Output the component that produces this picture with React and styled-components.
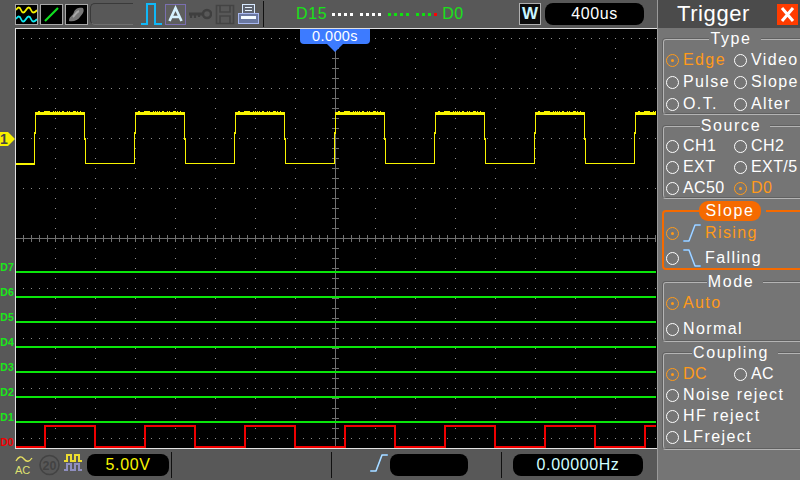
import React from "react";
import styled, { createGlobalStyle } from "styled-components";

const Global = createGlobalStyle`
  html, body { margin: 0; padding: 0; width: 800px; height: 480px; overflow: hidden; background: #585858; }
  * { box-sizing: border-box; }
`;

const Screen = styled.div`
  width: 800px; height: 480px; display: grid; grid-template-columns: 657px 143px;
  font-family: "Liberation Sans", Arial, sans-serif; overflow: hidden; background: #585858;
`;
const Main = styled.div`display: grid; grid-template-rows: 28px 421px 31px; min-width: 0;`;
const TopBar = styled.header`display: flex; align-items: center; padding-left: 15px;`;
const Tools = styled.div`display: flex; align-items: center; gap: ${p => p.$gap}px; margin-left: ${p => p.$ml || 0}px;`;
const IconBox = styled.div`
  width: 23px; height: 21px; display: flex; background: #000; border: 1px solid #a8a8a8; outline: none;
  svg { display: block; width: 100%; height: 100%; }
`;
const Bracket = styled.div`
  width: 43px; height: 22px; border-top: 1px solid #3a3a3a; border-left: 1px solid #3a3a3a;
  border-top-left-radius: 5px; border-bottom-left-radius: 5px; border-bottom: 1px solid #707070;
`;
const Sep = styled.div`width: 1px; height: ${p => p.$h}px; background: ${p => p.$c || "#111"}; margin-left: ${p => p.$ml || 0}px; flex: none;`;
const Bus = styled.div`display: flex; align-items: center; margin-left: 32px; color: #19e319; font-size: 16px; letter-spacing: .6px; width: 170px; gap: 5px;`;
const DotRow = styled.div`display: flex; gap: 7px; align-items: center;`;
const DotGroup = styled.div`display: flex; gap: 3px;`;
const Dot = styled.i`display: block; width: 3px; height: 3px; background: ${p => p.$c};`;
const WBox = styled.div`
  width: 22px; height: 22px; margin-left: 53px; background: #0a0a0a; border: 1px solid #b0b0b0; color: #c9f6ff;
  font-size: 17px; font-weight: 700; line-height: 20px; text-align: center;
`;
const Pill = styled.div`
  width: ${p => p.$w}px; height: 22px; margin-left: ${p => p.$ml || 0}px; background: #000; border-radius: 8px; color: ${p => p.$c || "#fff"};
  font-size: 16px; letter-spacing: .6px; line-height: 22px; text-align: center; flex: none;
`;
const Mid = styled.div`display: flex; min-height: 0;`;
const Gutter = styled.div`width: 15px; display: flex; flex-direction: column; align-items: flex-start; padding-bottom: 2px;`;
const Marker = styled.div`
  margin-top: 104px; width: 15px; height: 14px; background: #f6f000; color: #444; font-size: 14px; font-weight: 700; line-height: 14px; padding-left: 0;
  clip-path: polygon(0 0, 8px 0, 15px 50%, 8px 100%, 0 100%);
`;
const Labels = styled.div`margin-top: auto; display: flex; flex-direction: column; gap: 15px;`;
const Tag = styled.div`height: 10px; width: 14px; font-size: 10.5px; line-height: 10px; font-weight: 700; text-align: center; color: ${p => p.$c}; white-space: nowrap;`;
const Plot = styled.div`
  position: relative; flex: 1; background: #000; border-left: 1px solid #e0e0e0; border-top: 1px solid #e0e0e0; border-bottom: 1px solid #e0e0e0;
  svg { display: block; }
`;
const TimeFlag = styled.div`
  position: absolute; left: 284px; top: 0; width: 70px; height: 15px; background: #3d7bff; color: #fff; border-radius: 0 0 4px 4px;
  font-size: 14.5px; letter-spacing: .4px; line-height: 15px; text-align: center;
  &::after { content: ""; position: absolute; left: 27px; top: 15px; border: 8px solid transparent; border-bottom: 0; border-top: 8px solid #3d7bff; }
`;
const BottomBar = styled.footer`display: flex; align-items: center; padding: 0 0 0 15px; gap: 0;`;
const Small = styled.div`width: ${p => p.$w}px; height: 24px; margin-left: ${p => p.$ml || 0}px; flex: none; svg { display: block; }`;

const Panel = styled.aside`
  background: #757575; color: #fff; overflow: hidden; display: flex; flex-direction: column; border-left: 1px solid #9a9a9a;
`;
const Head = styled.div`
  height: 28px; flex: none; background: #4b4b4b; display: flex; align-items: center; justify-content: flex-end; padding-right: 2px;
`;
const Title = styled.h1`margin: 0 27px 0 0; font-size: 22px; font-weight: 400; letter-spacing: .6px; line-height: 28px;`;
const Close = styled.div`width: 21px; height: 21px; background: #ff3c00; display: flex; svg { display: block; }`;
const Group = styled.fieldset`
  margin: ${p => p.$mt || 0}px -6px 0 4px; padding: ${p => p.$pt}px 0 ${p => p.$pb}px 2px; min-width: 0;
  border: 2px ${p => p.$on ? "solid #f56a00" : "groove #b4b4b4"}; border-radius: 4px;
  display: grid; grid-template-columns: 68px 68px; row-gap: ${p => p.$gap}px;
`;
const Legend = styled.legend`
  margin: 0 auto; height: 20px; line-height: 20px; font-size: 16px; letter-spacing: 1.6px; padding: 0 5px; transform: translateX(-4px);
`;
const OnLegend = styled.legend`
  margin: 0 auto; height: 20px; line-height: 19px; font-size: 16px; letter-spacing: 1.6px; padding: 0 7px; background: #f56a00; border-radius: 9px; color: #fff; transform: translateX(-5px);
`;
const Choice = styled.div`
  display: flex; align-items: center; gap: 4px; height: 18px; white-space: nowrap; font-size: 16px; letter-spacing: ${p => p.$ls ?? 1.4}px;
  color: ${p => p.$on ? "#ff9a1a" : "#fff"}; ${p => p.$wide ? "grid-column: 1 / -1;" : ""}
  svg { display: block; flex: none; margin-right: ${p => p.$ir || 0}px; }
`;
const Ring = styled.span`
  position: relative; flex: none; width: 13px; height: 13px; border-radius: 50%; border: 1px solid currentColor;
  ${p => p.$on ? `&::after { content: ""; position: absolute; left: 4px; top: 4px; width: 3px; height: 3px; background: currentColor; border-radius: 50%; }` : ""}
`;

const Wave = () => (
  <svg viewBox="0 0 21 19">
    <path d="M0 5q3-5 5 0t5 0 5 0 6 0" fill="none" stroke="#f5f000" strokeWidth="1.8" />
    <path d="M0 14q3-5 5 0t5 0 5 0 6 0" fill="none" stroke="#10e8f0" strokeWidth="1.8" />
  </svg>
);
const Diag = () => (
  <svg viewBox="0 0 21 19"><path d="M4 16 17 3" stroke="#10e020" strokeWidth="2.2" /></svg>
);
const Blob = () => (
  <svg viewBox="0 0 21 19">
    <path d="M3 16c0-5 4-5 5-9s6-5 9-4c2 4-1 6-3 9s-6 5-11 4z" fill="#777" />
    <path d="M7 12c2-2 3-5 6-6" stroke="#a8a8a8" strokeWidth="2" fill="none" />
  </svg>
);
const PulseIcon = () => (
  <svg width="21" height="22" viewBox="0 0 21 22" shapeRendering="crispEdges">
    <path d="M0 21H6V1H14V21H21" fill="none" stroke="#10b8f8" strokeWidth="2" />
  </svg>
);
const AIcon = () => (
  <svg width="21" height="21" viewBox="0 0 21 21">
    <rect x=".5" y=".5" width="20" height="20" fill="#5e5e5e" stroke="#7a6fb0" />
    <path d="M4.5 17 10.5 4 16.5 17M7 13H14" fill="none" stroke="#d6f2ff" strokeWidth="2.6" />
  </svg>
);
const KeyIcon = () => (
  <svg width="23" height="14" viewBox="0 0 23 14">
    <circle cx="18" cy="7" r="4" fill="none" stroke="#3f3f3f" strokeWidth="2.5" />
    <path d="M0 7H14" stroke="#3f3f3f" strokeWidth="3" />
    <path d="M2 8v3M6 8v3M10 8v2" stroke="#3f3f3f" strokeWidth="2.2" />
  </svg>
);
const DiskIcon = () => (
  <svg width="20" height="21" viewBox="0 0 20 21" fill="none" stroke="#444" strokeWidth="1.6">
    <path d="M1.5 1.5H18.5V19.5H1.5Z" />
    <path d="M5 1.5V8H15V1.5M5 19.5V12H15V19.5" />
  </svg>
);
const PrinterIcon = () => (
  <svg width="21" height="21" viewBox="0 0 21 21" shapeRendering="crispEdges">
    <rect x="4.5" y=".5" width="12" height="9" fill="#5e6470" stroke="#d8eaff" />
    <path d="M7 3H14M7 6H14" stroke="#e8f4ff" />
    <rect x=".5" y="9.5" width="20" height="10" fill="#6a78a0" stroke="#a8b8f0" />
    <rect x="3" y="12" width="15" height="3" fill="#f4fbff" />
  </svg>
);
const Edge = ({ fall, c = "#7cc4ff" }) => (
  <svg width="18" height="20" viewBox="0 0 18 20">
    <path d={fall ? "M0 2H6L12 18H18" : "M0 18H6L12 2H18"} fill="none" stroke={c} strokeWidth="1.7" />
    <path d={fall ? "M1 2H6L12 18H17" : "M1 18H6L12 2H17"} fill="none" stroke="#e4f4ff" strokeWidth=".6" />
  </svg>
);
const AcIcon = () => (
  <svg width="18" height="24" viewBox="0 0 18 24">
    <path d="M1 8q4-7 8-2t8-1" fill="none" stroke="#e8e060" strokeWidth="1.3" />
    <text x="0" y="21" fontSize="11" fontFamily="Liberation Sans" fill="#dfe070">AC</text>
  </svg>
);
const TwentyIcon = () => (
  <svg width="21" height="24" viewBox="0 0 21 24">
    <circle cx="10.5" cy="12" r="9.5" fill="none" stroke="#434343" strokeWidth="1.6" />
    <text x="10.5" y="16.5" fontSize="12.5" fontWeight="700" textAnchor="middle" fontFamily="Liberation Sans" fill="#434343">20</text>
  </svg>
);
const BwIcon = () => (
  <svg width="18" height="20" viewBox="0 0 18 20" shapeRendering="crispEdges">
    <path d="M0 8H3V2H7V8H11V2H15V8H18" fill="none" stroke="#ecdc30" strokeWidth="1.4" />
    <path d="M0 17H3V11H7V17H11V11H15V17H18" fill="none" stroke="#8f8fc0" strokeWidth="1.4" />
  </svg>
);

const rises = [35, 135, 235, 335, 435, 535, 635];
const CH1 = rises.map(x => {
  const fall = x + 50;
  return `M${x - 0.5} 164V133H${x + 0.5}V113.5H${fall - 0.5}V139H${fall + 0.5}V163.5H${x + 100 - 0.5}`;
});
const noise = [3, 4, 9, 10, 11, 12, 13, 14, 18, 20, 22, 24, 27, 28, 32, 34, 38, 39, 40, 42, 45];
const greens = [272, 297, 322, 347, 372, 397, 422];
const redD = (() => {
  let d = "M16 446.5H44.5";
  for (let x = 44.5; x < 656; x += 100) {
    d += `V426H${Math.min(x + 50, 656)}`;
    if (x + 50 < 656) d += `V446.5H${x + 100 < 656 ? x + 100 : 656}`;
  }
  return d;
})();

const Scope = () => {
  const rows = [38, 88, 138, 188, 288, 338, 388, 438];
  const cols = [55, 95, 135, 175, 215, 255, 295, 375, 415, 455, 495, 535, 575, 615];
  const h = [];
  for (let x = 23; x < 656; x += 8) h.push(x);
  const v = [];
  for (let y = 38; y < 447; y += 10) v.push(y);
  return (
    <svg width="640" height="419" viewBox="16 29 640 419" shapeRendering="crispEdges">
      <g fill="#8a8a8a">
        {rows.map(y => h.map(x => <rect key={y + "-" + x} x={x} y={y} width="1" height="1" />))}
        {cols.map(x => v.map(y => <rect key={x + "-" + y} x={x} y={y} width="1" height="1" />))}
      </g>
      <path d="M16 238.5H656M335.5 29V448" stroke="#707070" />
      <g stroke="#707070">
        {h.map(x => <path key={x} d={`M${x + .5} 235V242`} />)}
        {v.map(y => <path key={y} d={`M332 ${y + .5}H339`} />)}
      </g>
      <path d="M16 163.5H34.5" stroke="#f8f400" strokeWidth="2" fill="none" />
      {CH1.map((d, i) => <path key={i} d={d} stroke="#f8f400" strokeWidth="1.5" fill="none" />)}
      <g fill="#f8f400">
        {rises.map(x => <rect key={x} x={x} y="112" width={Math.min(50, 656 - x)} height="3" />)}
        {rises.flatMap(x => noise.filter(n => x + n < 656).map(n => <rect key={x + "n" + n} x={x + n} y="110.5" width="1.2" height="2" />))}
      </g>
      {greens.map(y => <rect key={y} x="16" y={y - 1} width="640" height="2" fill="#0ae60a" />)}
      <path d={redD} fill="none" stroke="#f00000" strokeWidth="2" />
    </svg>
  );
};

const dots = [
  ["#fff", "#fff", "#fff", "#fff"],
  ["#fff", "#fff", "#fff", "#fff"],
  ["#10e010", "#10e010", "#10e010", "#10e010"],
  ["#10e010", "#10e010", "#10e010", "#f00"],
];

const choice = (label, on, extra = {}) => (
  <Choice key={label} $on={on} {...extra}><Ring $on={on} />{label}</Choice>
);

export default function App() {
  return (
    <Screen>
      <Global />
      <Main>
        <TopBar>
          <Tools $gap={2}>
            <IconBox><Wave /></IconBox>
            <IconBox><Diag /></IconBox>
            <IconBox><Blob /></IconBox>
            <Bracket />
          </Tools>
          <Tools $gap={3} $ml={8}>
            <PulseIcon />
            <AIcon />
            <KeyIcon />
            <DiskIcon />
            <PrinterIcon />
          </Tools>
          <Sep $h={26} $ml={4} />
          <Bus>
            D15
            <DotRow>
              {dots.map((g, i) => <DotGroup key={i}>{g.map((c, j) => <Dot key={j} $c={c} />)}</DotGroup>)}
            </DotRow>
            D0
          </Bus>
          <WBox>W</WBox>
          <Pill $w={99} $ml={4}>400us</Pill>
        </TopBar>
        <Mid>
          <Gutter>
            <Marker>1</Marker>
            <Labels>
              {[7, 6, 5, 4, 3, 2, 1].map(n => <Tag key={n} $c="#19e919">D{n}</Tag>)}
              <Tag $c="#f00000">D0</Tag>
            </Labels>
          </Gutter>
          <Plot>
            <Scope />
            <TimeFlag>0.000s</TimeFlag>
          </Plot>
        </Mid>
        <BottomBar>
          <Small $w={18}><AcIcon /></Small>
          <Small $w={21} $ml={6}><TwentyIcon /></Small>
          <Small $w={18} $ml={4}><BwIcon /></Small>
          <Pill $w={82} $ml={5} $c="#f8f400">5.00V</Pill>
          <Sep $h={26} $ml={2} />
          <Sep $h={26} $ml={159} />
          <Small $w={18} $ml={38}><Edge c="#7cc4ff" /></Small>
          <Pill $w={78} $ml={2} />
          <Sep $h={26} $ml={33} />
          <Pill $w={130} $ml={11} $c="#d0ffff">0.00000Hz</Pill>
        </BottomBar>
      </Main>
      <Panel>
        <Head>
          <Title>Trigger</Title>
          <Close>
            <svg width="21" height="21" viewBox="0 0 21 21"><path d="M5 4 16 17M16 4 5 17" stroke="#fff" strokeWidth="3" /></svg>
          </Close>
        </Head>
        <Group $mt={1} $pt={2} $pb={0} $gap={4}>
          <Legend>Type</Legend>
          {choice("Edge", true)}{choice("Video")}
          {choice("Pulse")}{choice("Slope")}
          {choice("O.T.")}{choice("Alter")}
        </Group>
        <Group $mt={1} $pt={1} $pb={0} $gap={3}>
          <Legend>Source</Legend>
          {choice("CH1", false, { $ls: .4 })}{choice("CH2", false, { $ls: .4 })}
          {choice("EXT", false, { $ls: .4 })}{choice("EXT/5", false, { $ls: .4 })}
          {choice("AC50", false, { $ls: .4 })}{choice("D0", true, { $ls: .4 })}
        </Group>
        <Group $on $mt={2} $pt={3} $pb={1} $gap={7}>
          <OnLegend>Slope</OnLegend>
          <Choice $on $wide><Ring $on /><Edge c="#6ab4ff" />Rising</Choice>
          <Choice $wide><Ring /><Edge fall c="#6ab4ff" />Falling</Choice>
        </Group>
        <Group $mt={2} $pt={2} $pb={2} $gap={8}>
          <Legend>Mode</Legend>
          {choice("Auto", true, { $wide: true })}
          {choice("Normal", false, { $wide: true })}
        </Group>
        <Group $mt={1} $pt={2} $pb={2} $gap={3}>
          <Legend>Coupling</Legend>
          {choice("DC", true, { $ls: .4 })}{choice("AC", false, { $ls: .4 })}
          {choice("Noise reject", false, { $wide: true })}
          {choice("HF reject", false, { $wide: true })}
          {choice("LFreject", false, { $wide: true })}
        </Group>
      </Panel>
    </Screen>
  );
}
